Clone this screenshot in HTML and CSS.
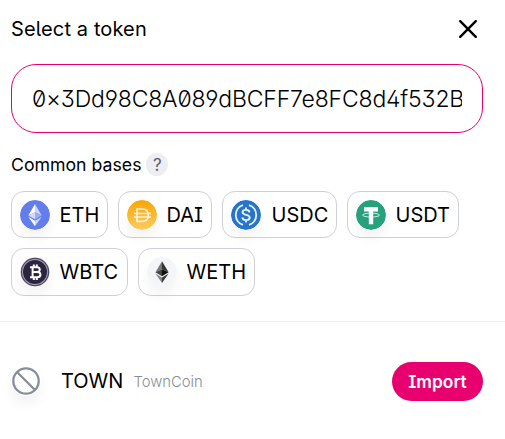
FILE: index.html
```html
<!DOCTYPE html>
<html lang="en">
<head>
<meta charset="utf-8">
<title>Select a token</title>
<link rel="stylesheet" href="styles.css">
</head>
<body>
<main class="modal">
  <header class="header">
    <h1 class="title">Select a token</h1>
    <svg class="close" viewBox="0 0 30 30"><path d="M7.2 7.2 22.8 22.8M22.8 7.2 7.2 22.8"/></svg>
  </header>
  <div class="search"><div class="search-text">0×3Dd98C8A089dBCFF7e8FC8d4f532B</div></div>
  <div class="label"><span class="label-text">Common bases</span><span class="help">?</span></div>
  <div class="bases">
    <div class="base eth">
      <svg class="logo" viewBox="0 0 30 30"><circle cx="15" cy="15" r="15" fill="#627eea"/><path d="M15 4 8.3 15.4 15 12.3z" fill="#fff"/><path d="m15 4 6.7 11.4L15 12.3z" fill="#cbd5fa"/><path d="m8.3 15.4 6.7-3.1v7z" fill="#d5dcfa"/><path d="m15 12.3 6.7 3.1-6.7 3.9z" fill="#9eafef"/><path d="m8.3 16.8 6.7 9.4v-5.5z" fill="#fff"/><path d="m21.7 16.8-6.7 9.4v-5.5z" fill="#cbd5fa"/></svg>
      <span>ETH</span>
    </div>
    <div class="base dai">
      <svg class="logo" viewBox="0 0 30 30"><defs><linearGradient id="gold" x2="0" y2="1"><stop stop-color="#f9a606"/><stop offset="1" stop-color="#fbcc5f"/></linearGradient></defs><circle cx="15" cy="15" r="15" fill="url(#gold)"/><g fill="none" stroke="#fff3dc" stroke-width="1.6"><path d="M10 21.4V9h4.7c4.2 0 6.7 2.5 6.7 6.2s-2.5 6.2-6.7 6.2zM7 13.5h16.8M7 17h16.8"/></g></svg>
      <span>DAI</span>
    </div>
    <div class="base usdc">
      <svg class="logo" viewBox="0 0 30 30"><circle cx="15" cy="15" r="15" fill="#2775ca"/><g fill="none" stroke="#e8f1fb" stroke-width="1.9"><path d="M12 5.1a10.4 10.4 0 0 0 0 19.8M18 5.1a10.4 10.4 0 0 1 0 19.8"/><path d="M18.5 12.3c-.2-1.7-1.6-2.4-3.5-2.4-2.1 0-3.4.9-3.4 2.4 0 3.5 7.1 1.6 7.1 5.2 0 1.6-1.4 2.6-3.6 2.6-2.3 0-3.6-.9-3.8-2.7M15 7.5v2.3m0 10.3v2.4"/></g></svg>
      <span>USDC</span>
    </div>
    <div class="base usdt">
      <svg class="logo" viewBox="0 0 30 30"><circle cx="15" cy="15" r="15" fill="#26a17b"/><path d="M8 7.3h14v4.1h-4.8v12.8h-4.4V11.4H8z" fill="#fff"/><ellipse cx="15" cy="15.1" rx="8.5" ry="1.9" fill="none" stroke="#e2f4ee" stroke-width=".9"/></svg>
      <span>USDT</span>
    </div>
    <div class="base wbtc">
      <svg class="logo" viewBox="0 0 30 30"><circle cx="15" cy="15" r="15" fill="#e9e8ec"/><circle cx="15" cy="15" r="13.6" fill="#aaa7b4" stroke="#4d485f" stroke-width="1.3"/><circle cx="15" cy="15" r="12" fill="#2b2440"/><path d="M10 10.2h6.7c4 0 4 4.5.6 4.7 4.3.2 4.2 5.3-.2 5.3H10m2.6-10v10m0-5.3h4.7M13.8 7.4v2.8m3-2.8v2.8m-3 10V23m3-2.8V23" fill="none" stroke="#fff" stroke-width="2"/></svg>
      <span>WBTC</span>
    </div>
    <div class="base weth">
      <svg class="logo" viewBox="0 0 30 30"><circle cx="15" cy="15" r="15" fill="#f3f5f8"/><path d="M15 4.2 8.4 15.2 15 12.2z" fill="#777"/><path d="m15 4.2 6.6 11L15 12.2z" fill="#333"/><path d="m8.4 15.2 6.6-3v7z" fill="#444"/><path d="m15 12.2 6.6 3-6.6 4z" fill="#111"/><path d="m8.4 16.6 6.6 9.3v-5.3z" fill="#858585"/><path d="m21.6 16.6-6.6 9.3v-5.3z" fill="#3b3b3b"/></svg>
      <span>WETH</span>
    </div>
  </div>
  <hr class="divider">
  <div class="result">
    <svg class="unknown" viewBox="0 0 30 30"><g fill="none" stroke="#888d9b" stroke-width="2.3"><circle cx="15" cy="15" r="12.7"/><path d="m6 6 18 18"/></g></svg>
    <span class="symbol">TOWN</span>
    <span class="name">TownCoin</span>
    <button class="import">Import</button>
  </div>
</main>
</body>
</html>
```
FILE: styles.css
```css
* { box-sizing: border-box; }
body {
  margin: 0;
  background: #fff;
  color: #000;
  font-family: Inter, sans-serif;
  font-feature-settings: "ss01", "ss02", "cv01", "cv03";
}
.modal { width: 505px; height: 439px; overflow: hidden; }
.header { display: flex; justify-content: space-between; align-items: center; height: 64px; padding: 0 22px 6px 11px; }
.title { margin: 0; font-size: 20px; font-weight: 400; line-height: 24px; letter-spacing: .12px; }
.close { width: 30px; height: 30px; fill: none; stroke: #000; stroke-width: 2.4; stroke-linecap: round; }
.search { width: 472px; height: 69px; margin-left: 11px; padding: 0 20px; border: 1px solid #e8006f; border-radius: 25px; }
.search-text { overflow: hidden; font-size: 23px; font-weight: 300; line-height: 69px; height: 67px; letter-spacing: -.18px; white-space: nowrap; }
.label { display: flex; align-items: center; height: 24px; margin: 19px 0 0 11px; font-size: 17.7px; }
.help { display: grid; place-items: center; width: 22px; height: 23px; margin-left: 5px; border-radius: 50%; background: #edeef2; color: #565a69; font-size: 17px; line-height: 23px; padding-top: 1px; }
.bases { display: flex; flex-wrap: wrap; gap: 10px; margin: 15px 11px 0; }
.base { display: flex; align-items: center; height: 47px; padding-left: 8px; border: 1px solid #ced0d9; border-radius: 13px; font-size: 20px; white-space: nowrap; }
.logo { flex: none; width: 30px; height: 30px; margin-right: 9.5px; border-radius: 50%; box-shadow: 0 8px 13px rgb(0 0 0 / 5%); }
.eth { width: 97px; }
.dai { width: 94px; }
.usdc { width: 115px; }
.usdt { width: 112px; }
.usdc .logo { margin-right: 10.5px; }
.wbtc { width: 117px; height: 48px; }
.weth { width: 117px; height: 48px; }
.divider { height: 1px; margin: 25px 0 0; border: 0; background: #edeef2; }
.result { display: flex; align-items: center; height: 119px; padding: 0 22px 0 11px; }
.unknown { width: 30px; height: 30px; margin: -2px 20px 0 0; border-radius: 50%; box-shadow: 0 8px 13px rgb(0 0 0 / 5%); }
.symbol { margin-top: -2px; font-size: 20px; }
.name { margin-left: 10px; color: #888d9b; font-size: 14.8px; font-weight: 300; }
.import { width: 91px; height: 39px; margin-left: auto; padding: 0; border: 0; border-radius: 20px; background: #e8006f; color: #fff; font: 600 17.4px Inter, sans-serif; font-feature-settings: inherit; }
```
